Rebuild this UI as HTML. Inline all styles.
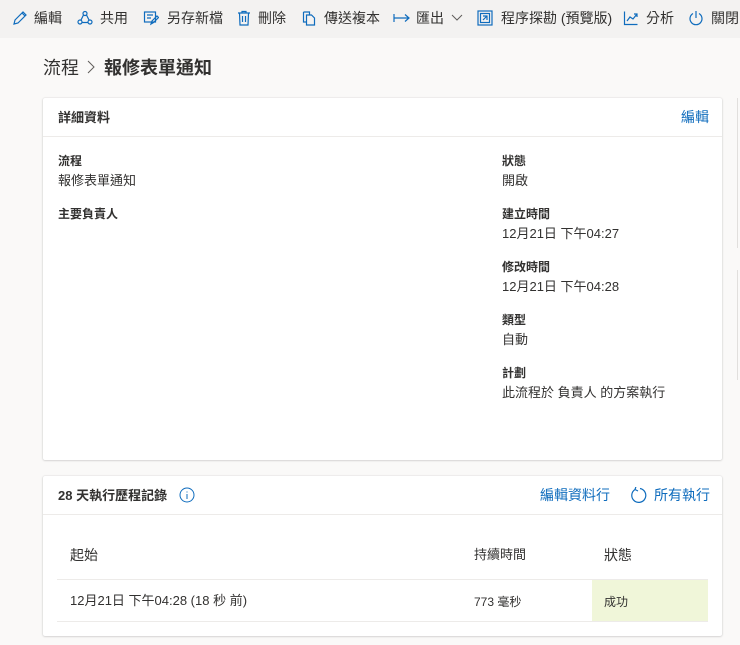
<!DOCTYPE html>
<html><head><meta charset="utf-8">
<style>
*{margin:0;padding:0;box-sizing:border-box}
body{width:740px;height:645px;overflow:hidden;background:#faf9f8;font-family:"Liberation Sans","Noto Sans CJK TC",sans-serif;color:#323130;position:relative}
.bar{position:absolute;left:0;top:0;width:740px;height:38px;background:#f3f2f1}
.bi{position:absolute;top:9px;font-size:14px;color:#323130;white-space:nowrap;line-height:18px}
.bi svg{position:absolute;left:0;top:1px}
.ab{position:absolute}
.card{position:absolute;background:#fff;box-shadow:0 0.5px 2px rgba(0,0,0,.2),0 0 1px rgba(0,0,0,.1);border-radius:2px}
.t{position:absolute;white-space:nowrap;font-size:13px;line-height:18px}
.lbl{font-weight:bold;font-size:12px}
.blue{color:#0f6cbd}
</style></head><body>
<div class="bar">
 <div class="bi" style="left:12px"><svg width="16" height="16" viewBox="0 0 16 16" fill="none" stroke="#0f6cbd" stroke-width="1.2"><path d="M2 14l1-4 8-8 3 3-8 8z M10 3l3 3"/></svg><span style="margin-left:22px">編輯</span></div>
 <div class="bi" style="left:77px"><svg width="16" height="16" viewBox="0 0 16 16" fill="none" stroke="#0f6cbd" stroke-width="1.2"><circle cx="8" cy="3.5" r="2"/><circle cx="3" cy="12" r="2"/><circle cx="13" cy="12" r="2"/><path d="M6.5 5L4 10M9.5 5l2.5 5M5 12.5h6"/></svg><span style="margin-left:23px">共用</span></div>
 <div class="bi" style="left:143px"><svg width="16" height="16" viewBox="0 0 16 16" fill="none" stroke="#0f6cbd" stroke-width="1.2"><rect x="1.5" y="2" width="11" height="10"/><path d="M4 5h6M4 8h4M8 14l1-3 5-5 1.5 1.5-5 5z"/></svg><span style="margin-left:24px">另存新檔</span></div>
 <div class="bi" style="left:236px"><svg width="16" height="16" viewBox="0 0 16 16" fill="none" stroke="#0f6cbd" stroke-width="1.2"><path d="M2 3h12M6 3V1.5h4V3M3.5 3l.5 12h8l.5-12M6.5 6v6M9.5 6v6"/></svg><span style="margin-left:22px">刪除</span></div>
 <div class="bi" style="left:301px"><svg width="16" height="16" viewBox="0 0 16 16" fill="none" stroke="#0f6cbd" stroke-width="1.2"><path d="M2.5 2h6v3M2.5 2v10h3M5.5 5h5l3 3v7h-8z"/></svg><span style="margin-left:23px">傳送複本</span></div>
 <div class="bi" style="left:393px"><svg width="18" height="16" viewBox="0 0 18 16" fill="none" stroke="#0f6cbd" stroke-width="1.2"><path d="M1 4v8M1 8h15M12 4.5l4 3.5-4 3.5"/></svg><span style="margin-left:23px">匯出</span><svg style="left:58px;top:5px" width="12" height="8" viewBox="0 0 12 8" fill="none" stroke="#605e5c" stroke-width="1"><path d="M1 1l5 5 5-5"/></svg></div>
 <div class="bi" style="left:477px"><svg width="16" height="16" viewBox="0 0 16 16" fill="none" stroke="#0f6cbd" stroke-width="1.2"><rect x="1" y="1" width="14" height="14"/><rect x="3.5" y="3.5" width="9" height="9"/><path d="M6 6h4v4M6 10l4-4"/></svg><span style="margin-left:24px">程序探勘 (預覽版)</span></div>
 <div class="bi" style="left:623px"><svg width="16" height="16" viewBox="0 0 16 16" fill="none" stroke="#0f6cbd" stroke-width="1.2"><path d="M1.5 1.5v13h13M4 11l3-4 3 2 4-5M11 4h3v3"/></svg><span style="margin-left:23px">分析</span></div>
 <div class="bi" style="left:688px"><svg width="16" height="16" viewBox="0 0 16 16" fill="none" stroke="#0f6cbd" stroke-width="1.2"><path d="M5 3.5a6 6 0 1 0 6 0M8 1v7"/></svg><span style="margin-left:23px">關閉</span></div>
</div>

<div class="t" style="left:43px;top:56px;font-size:18px;line-height:24px">流程</div>
<svg class="ab" style="left:86px;top:60px" width="10" height="14" viewBox="0 0 10 14" fill="none" stroke="#605e5c" stroke-width="1"><path d="M2 1l6 6-6 6"/></svg>
<div class="t" style="left:104px;top:56px;font-size:18px;line-height:24px;font-weight:bold">報修表單通知</div>

<div class="card" style="left:43px;top:98px;width:679px;height:362px">
 <div style="position:absolute;left:0;right:0;top:38px;border-top:1px solid #edebe9"></div>
</div>
<div class="t lbl" style="left:58px;top:109px;font-size:13px">詳細資料</div>
<div class="t blue" style="left:681px;top:108px;font-size:14px">編輯</div>
<div class="t lbl" style="left:58px;top:152px">流程</div>
<div class="t" style="left:58px;top:172px">報修表單通知</div>
<div class="t lbl" style="left:58px;top:205px">主要負責人</div>
<div class="t lbl" style="left:502px;top:152px">狀態</div>
<div class="t" style="left:502px;top:172px">開啟</div>
<div class="t lbl" style="left:502px;top:205px">建立時間</div>
<div class="t" style="left:502px;top:225px">12月21日 下午04:27</div>
<div class="t lbl" style="left:502px;top:258px">修改時間</div>
<div class="t" style="left:502px;top:278px">12月21日 下午04:28</div>
<div class="t lbl" style="left:502px;top:311px">類型</div>
<div class="t" style="left:502px;top:331px">自動</div>
<div class="t lbl" style="left:502px;top:364px">計劃</div>
<div class="t" style="left:502px;top:384px">此流程於 負責人 的方案執行</div>

<div class="card" style="left:43px;top:476px;width:679px;height:160px">
 <div style="position:absolute;left:0;right:0;top:38px;border-top:1px solid #edebe9"></div>
</div>
<div class="t lbl" style="left:58px;top:487px;font-size:13px">28 天執行歷程記錄</div>
<svg class="ab" style="left:179px;top:487px" width="16" height="16" viewBox="0 0 16 16" fill="none" stroke="#0f6cbd" stroke-width="1"><circle cx="8" cy="8" r="7"/><path d="M8 7v5M8 4.5v1"/></svg>
<div class="t blue" style="left:540px;top:486px;font-size:14px">編輯資料行</div>
<svg class="ab" style="left:630px;top:487px" width="17" height="17" viewBox="0 0 17 17" fill="none" stroke="#0f6cbd" stroke-width="1.2"><path d="M5 2.5a7 7 0 1 0 5-1M5 2.5l3 1.5M5 2.5l1-3"/></svg>
<div class="t blue" style="left:654px;top:486px;font-size:14px">所有執行</div>

<div class="t" style="left:70px;top:546px;font-size:14px">起始</div>
<div class="t" style="left:474px;top:546px;font-size:13px">持續時間</div>
<div class="t" style="left:604px;top:546px;font-size:14px">狀態</div>
<div class="ab" style="left:57px;top:579px;width:651px;border-top:1px solid #edebe9"></div>
<div class="ab" style="left:592px;top:580px;width:116px;height:41px;background:#f0f6d9"></div>
<div class="t" style="left:70px;top:592px">12月21日 下午04:28 (18 秒 前)</div>
<div class="t" style="left:474px;top:593px;font-size:12px">773 毫秒</div>
<div class="t" style="left:604px;top:593px;font-size:12px">成功</div>
<div class="ab" style="left:57px;top:621px;width:651px;border-top:1px solid #edebe9"></div>

<div class="ab" style="left:737px;top:98px;width:3px;height:150px;border-left:1px solid #e1dfdd"></div>
<div class="ab" style="left:737px;top:270px;width:3px;height:110px;border-left:1px solid #e1dfdd"></div>
</body></html>
